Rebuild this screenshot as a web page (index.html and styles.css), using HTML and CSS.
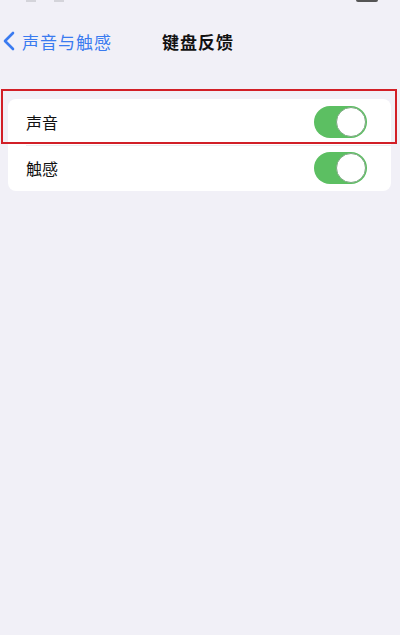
FILE: index.html
```html
<!DOCTYPE html>
<html lang="zh-CN">
<head>
  <meta charset="UTF-8" />
  <meta name="viewport" content="width=device-width, initial-scale=1.0" />
  <title>键盘反馈</title>
  <link rel="stylesheet" href="styles.css">
</head>
<body>
  <div class="status-bar">
    <span class="status-left"><i></i><i></i></span>
    <span class="battery"></span>
  </div>
  <div class="nav-bar">
    <a href="#" class="back">
      <svg class="chevron" width="12" height="20" viewBox="0 0 12 20">
        <path d="M10 2 L2 10 L10 18" fill="none" stroke="#3a7bf0" stroke-width="2.6" stroke-linecap="round" stroke-linejoin="round"/>
      </svg>
      <span>声音与触感</span>
    </a>
    <div class="title">键盘反馈</div>
  </div>

  <div class="group">
    <div class="row highlight">
      <span class="label">声音</span>
      <span class="switch on"><span class="knob"></span></span>
    </div>
    <div class="row">
      <span class="label">触感</span>
      <span class="switch on"><span class="knob"></span></span>
    </div>
  </div>
</body>
</html>
```

FILE: styles.css
```css
body {
  margin: 0;
  padding: 0;
  background-color: #f1f0f7;
  font-family: "Noto Sans CJK SC", "Noto Sans", sans-serif;
  color: #111;
  overflow: hidden;
}

.status-bar {
  height: 20px;
  display: flex;
  justify-content: space-between;
  align-items: flex-start;
  padding: 0 22px 0 26px;
}

/* only the bottom edge of the status bar is left on screen */
.status-left {
  display: flex;
  gap: 18px;
}

.status-left i {
  width: 10px;
  height: 2px;
  background-color: #d4d4da;
}

.battery {
  width: 22px;
  height: 2px;
  background-color: #555;
  border-radius: 0 0 2px 2px;
}

.nav-bar {
  position: relative;
  height: 42px;
  display: flex;
  align-items: center;
}

.back {
  display: flex;
  align-items: center;
  gap: 7px;
  padding-left: 3px;
  color: #3a7bf0;
  text-decoration: none;
  font-size: 17px;
  letter-spacing: 1px;
  z-index: 1;
}

.title {
  position: absolute;
  left: 0;
  right: 0;
  text-align: center;
  font-size: 17px;
  font-weight: bold;
  letter-spacing: 1px;
  padding-right: 4px;
}

.group {
  margin: 37px 0 0 8px;
  width: 383px;
  background-color: #fff;
  border-radius: 8px;
}

.row {
  position: relative;
  height: 46px;
  display: flex;
  align-items: center;
  justify-content: space-between;
  padding: 0 24px 0 18px;
}

.row + .row::before {
  content: "";
  position: absolute;
  top: 0;
  left: 18px;
  right: 0;
  border-top: 1px solid #ececf0;
}

.label {
  font-size: 16px;
}

/* red marker frame drawn over the first row */
.highlight::after {
  content: "";
  position: absolute;
  top: -10px;
  left: -7px;
  right: -6px;
  bottom: 1px;
  border: 2px solid #d21f27;
  pointer-events: none;
}

.switch {
  position: relative;
  width: 53px;
  height: 32px;
  border-radius: 16px;
  background-color: #e5e5ea;
}

.switch.on {
  background-color: #5cbf62;
}

.knob {
  position: absolute;
  top: 1px;
  right: 1px;
  width: 28px;
  height: 28px;
  border-radius: 50%;
  background-color: #fff;
  border: 1px solid #7ea882;
}
```
